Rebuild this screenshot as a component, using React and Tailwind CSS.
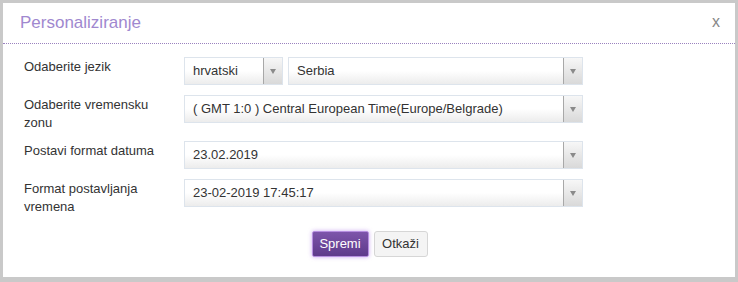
const FONT = { fontFamily: '"Liberation Sans", Arial, sans-serif' };

function Select({ value, className = "" }) {
  return (
    <div
      className={`flex h-[28px] border border-[#dde4ec] bg-linear-to-b from-white via-white to-[#ececec] ${className}`}
    >
      <div className="flex flex-1 items-center pl-[8px] text-[13px] text-[#333] whitespace-nowrap overflow-hidden">
        {value}
      </div>
      <div className="flex w-[19px] items-center justify-center border-l border-[#a8a8a8] bg-linear-to-b from-[#f7f7f7] to-[#d9d9d9]">
        <span className="block h-0 w-0 border-x-[3px] border-t-[5px] border-x-transparent border-t-[#8a8a8a]" />
      </div>
    </div>
  );
}

function Row({ label, children }) {
  return (
    <div className="flex items-start">
      <div className="w-[160px] pt-[1px] pr-[20px] text-[13px] leading-[18px] text-[#333]">
        {label}
      </div>
      <div className="flex w-[399px] gap-[5px]">{children}</div>
    </div>
  );
}

export default function App() {
  return (
    <div className="h-[282px] w-[738px] bg-[#c9c9c9] pl-[3px] pt-[3px]" style={FONT}>
      <div className="flex h-[274px] w-[732px] flex-col bg-white">
        {/* Header */}
        <div className="flex h-[41px] items-center justify-between border-b border-dotted border-[#9a82bf] pl-[17px] pr-[15px]">
          <h1 className="text-[17px] leading-6 text-[#a088cf]">Personaliziranje</h1>
          <span className="pb-[2px] text-[16px] leading-none text-[#888]">x</span>
        </div>

        {/* Body */}
        <div className="flex flex-col gap-[10px] pl-[21px] pt-[13px]">
          <Row label="Odaberite jezik">
            <Select value="hrvatski" className="w-[99px]" />
            <Select value="Serbia" className="flex-1" />
          </Row>
          <Row label="Odaberite vremensku zonu">
            <Select value="( GMT 1:0 ) Central European Time(Europe/Belgrade)" className="flex-1" />
          </Row>
          <div className="-mt-[1px]">
            <Row label="Postavi format datuma">
              <Select value="23.02.2019" className="flex-1" />
            </Row>
          </div>
          <Row label="Format postavljanja vremena">
            <Select value="23-02-2019 17:45:17" className="flex-1" />
          </Row>
        </div>

        {/* Footer */}
        <div className="mt-[15px] flex justify-center gap-[5px] pl-[1px]">
          <button className="h-[26px] w-[57px] rounded-[2px] border border-[#b68fe0] bg-linear-to-b from-[#7d55aa] to-[#5e3a8b] text-[13px] text-white shadow-[0_0_4px_rgba(160,100,230,0.55)]">
            Spremi
          </button>
          <button className="h-[26px] w-[54px] rounded-[3px] border border-[#d6d6d6] bg-[#f4f4f4] text-[13px] text-[#333]">
            Otkaži
          </button>
        </div>
      </div>
    </div>
  );
}
